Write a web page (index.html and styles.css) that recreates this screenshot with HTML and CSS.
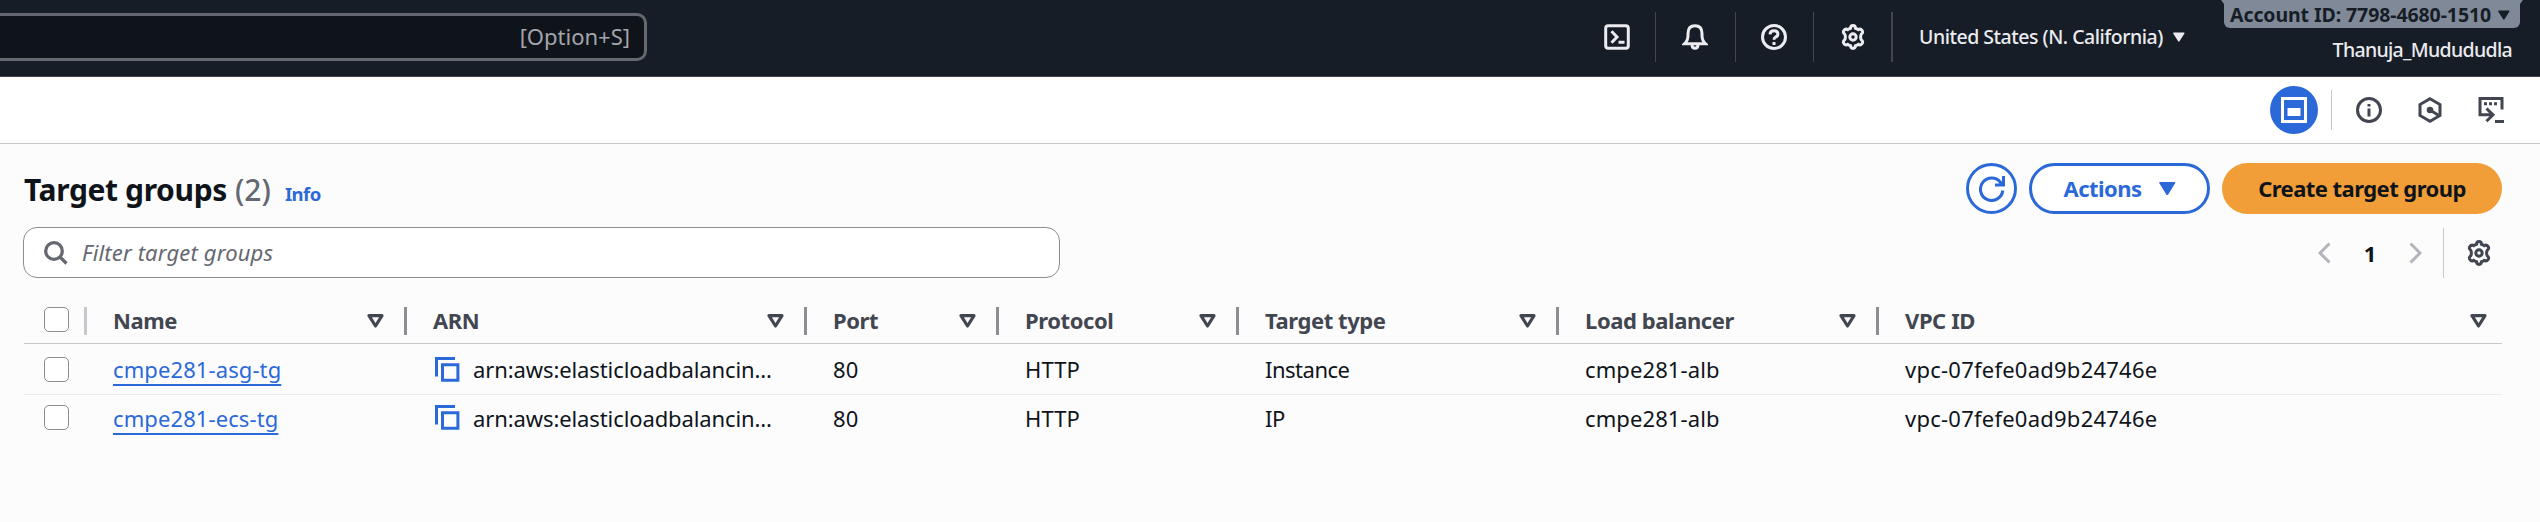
FILE: index.html
```html
<!DOCTYPE html>
<html lang="en">
<head>
<meta charset="utf-8">
<title>Target groups</title>
<link rel="stylesheet" href="styles.css">
</head>
<body>
<svg class="defs" aria-hidden="true">
  <symbol id="gear" viewBox="0 0 26 26">
    <path d="M10.6 4.2 Q10.6 1.6 13 1.6 Q15.4 1.6 15.4 4.2 Q17 4.7 18.2 5.6 Q20.5 4.3 22 6.3 Q23.6 8.6 21.4 10 Q20.600 11.400 20.600 13 Q20.600 14.600 21.4 16 Q23.600 17.400 22 19.700 Q20.500 21.700 18.200 20.400 Q17 21.300 15.400 21.800 Q15.400 24.400 13 24.400 Q10.600 24.400 10.600 21.800 Q9 21.300 7.800 20.400 Q5.500 21.700 4 19.700 Q2.400 17.400 4.600 16 Q5.400 14.600 5.400 13 Q5.400 11.400 4.600 10 Q2.400 8.600 4 6.300 Q5.500 4.300 7.800 5.600 Q9 4.700 10.600 4.200 Z"/>
    <circle cx="13" cy="13" r="3.200"/>
  </symbol>
  <symbol id="sort" viewBox="0 0 17 14"><path d="M2 1.700 H15 L8.500 12 Z"/></symbol>
  <symbol id="down" viewBox="0 0 17 14"><path d="M1 0 H15.500 Q16.800 .4 16 1.600 L9.200 12.400 Q8.250 13.400 7.300 12.400 L.5 1.600 Q-.3 .4 1 0 Z"/></symbol>
  <symbol id="copy" viewBox="0 0 25 25"><path d="M1.500 19.500 V1.500 H20 M7.500 7.700 H22.900 V23.200 H7.500 Z"/></symbol>
</svg>

<header class="topbar">
  <div class="search"><span>[Option+S]</span></div>
  <nav class="tools">
    <a class="tool t1"><svg class="ico" viewBox="0 0 26 26"><rect x="1.700" y="1.700" width="22.600" height="22.600" rx="2.500"/><path d="M7.500 7.200 L13 13 L7.500 18.800 M14.500 18.300 H20.500"/></svg></a>
    <a class="tool t2"><svg class="ico" viewBox="0 0 26 26"><path d="M2.500 19.800 Q6 16.500 6 11.500 V9.500 Q6 1.800 13 1.800 Q20 1.800 20 9.500 V11.500 Q20 16.500 23.500 19.800 Z M10 20.500 Q10 24.300 13 24.300 Q16 24.300 16 20.500"/></svg></a>
    <a class="tool t3"><svg class="ico" viewBox="0 0 26 26"><circle cx="13" cy="13" r="11.500"/><path d="M9 10.300 Q9.200 6.700 13 6.700 Q16.900 6.700 16.900 9.900 Q16.900 12 14.600 13 Q13 13.800 13 15.800 M13 18 V21"/></svg></a>
    <a class="tool t4"><svg class="ico"><use href="#gear"/></svg></a>
  </nav>
  <div class="region"><span>United States (N. California)</span><svg class="caret"><use href="#down"/></svg></div>
  <div class="account">
    <div class="badge"><span>Account ID: 7798-4680-1510</span><svg class="caret"><use href="#down"/></svg></div>
    <div class="user"><span>Thanuja_Mudududla</span></div>
  </div>
</header>

<div class="panelbar">
  <div class="active"><svg class="panel-ico" viewBox="0 0 26 26"><rect x="1.500" y="1.500" width="23" height="23"/><rect class="solid" x="6.500" y="11" width="13" height="8"/></svg></div>
  <i class="rule"></i>
  <svg class="ico p1" viewBox="0 0 26 26"><circle cx="13" cy="13" r="11.500"/><path d="M13 7 V9.600 M13 11.500 V19.500"/></svg>
  <svg class="ico p2" viewBox="0 0 26 26"><path d="M13 1.800 L23 7.500 V18.500 L13 24.200 L3 18.500 V7.500 Z M13 13 L21 18"/><circle class="dot" cx="13" cy="13" r="3.300"/></svg>
  <svg class="ico p3" viewBox="0 0 26 26"><path d="M24 12.500 V1.500 H2 V17.800 H15 M8.500 11.500 L15 17.800 L8.500 24.200 M17 24.500 H26 M6 6.800 H9 M11 6.800 H14 M16 6.800 H19"/></svg>
</div>

<main class="content">
  <div class="head">
    <h1>Target groups</h1>
    <span class="count">(2)</span>
    <a class="info">Info</a>
    <div class="buttons">
      <button class="btn round"><svg class="refresh" viewBox="0 0 26 26"><path d="M23.800 14.500 A11.200 11.200 0 1 1 21.600 6.500 L23.500 9 M24.500 0 V9 H16"/></svg></button>
      <button class="btn actions"><span>Actions</span><svg class="caret big"><use href="#down"/></svg></button>
      <button class="btn create"><span>Create target group</span></button>
    </div>
  </div>
  <div class="filterbar">
    <div class="filter"><svg class="mag" viewBox="0 0 24 24"><circle cx="10" cy="10" r="8.300"/><path d="M16 16 L22.500 22.500"/></svg><span>Filter target groups</span></div>
    <div class="pager">
      <svg class="chev" viewBox="0 0 13 22"><path d="M11.500 1.500 L2 11 L11.500 20.500"/></svg>
      <b>1</b>
      <svg class="chev" viewBox="0 0 13 22"><path d="M1.500 1.500 L11 11 L1.500 20.500"/></svg>
      <i class="rule"></i>
      <svg class="ico dark"><use href="#gear"/></svg>
    </div>
  </div>
  <table class="grid">
    <colgroup><col class="c0"><col class="c1"><col class="c2"><col class="c3"><col class="c4"><col class="c5"><col class="c6"><col class="c7"></colgroup>
    <thead><tr>
      <th class="sel"><div class="hd"><i class="box"></i></div></th>
      <th><div class="hd"><span class="label">Name</span><svg class="sort"><use href="#sort"/></svg></div></th>
      <th><div class="hd"><span class="label">ARN</span><svg class="sort"><use href="#sort"/></svg></div></th>
      <th><div class="hd"><span class="label">Port</span><svg class="sort"><use href="#sort"/></svg></div></th>
      <th><div class="hd"><span class="label">Protocol</span><svg class="sort"><use href="#sort"/></svg></div></th>
      <th><div class="hd"><span class="label">Target type</span><svg class="sort"><use href="#sort"/></svg></div></th>
      <th><div class="hd"><span class="label">Load balancer</span><svg class="sort"><use href="#sort"/></svg></div></th>
      <th class="last"><div class="hd"><span class="label">VPC ID</span><svg class="sort"><use href="#sort"/></svg></div></th>
    </tr></thead>
    <tbody>
      <tr class="r1">
        <td class="sel"><i class="box"></i></td>
        <td><a class="link">cmpe281-asg-tg</a></td>
        <td><div class="arn"><svg class="copy"><use href="#copy"/></svg><span>arn:aws:elasticloadbalancin…</span></div></td>
        <td>80</td><td>HTTP</td><td class="kind">Instance</td><td>cmpe281-alb</td><td class="vpc">vpc-07fefe0ad9b24746e</td>
      </tr>
      <tr class="r2">
        <td class="sel"><i class="box"></i></td>
        <td><a class="link">cmpe281-ecs-tg</a></td>
        <td><div class="arn"><svg class="copy"><use href="#copy"/></svg><span>arn:aws:elasticloadbalancin…</span></div></td>
        <td>80</td><td>HTTP</td><td class="kind">IP</td><td>cmpe281-alb</td><td class="vpc">vpc-07fefe0ad9b24746e</td>
      </tr>
    </tbody>
  </table>
</main>
</body>
</html>
```
FILE: styles.css
```css
* { box-sizing: border-box; }
body {
  margin: 0;
  width: 2540px;
  height: 522px;
  overflow: hidden;
  background: #fcfcfd;
  color: #0f141a;
  font-family: "Noto Sans", "Open Sans", sans-serif;
  font-size: 22px;
  line-height: 30px;
}
svg { display: block; flex: none; fill: none; }
span { white-space: nowrap; }
.defs { position: absolute; width: 0; height: 0; }

.topbar {
  display: flex;
  height: 77px;
  background: #161d26;
  border-bottom: 1px solid #424650;
  color: #ebebf0;
  font-size: 19.500px;
  font-weight: 500;
}
.search {
  display: flex;
  align-items: center;
  justify-content: flex-end;
  width: 647px;
  height: 48px;
  margin-top: 13px;
  padding: 0 14px 2px 0;
  border: 3px solid #656871;
  border-left: 0;
  border-radius: 0 10px 10px 0;
  background: #0f141a;
  color: #a4a4ad;
  font-size: 22px;
  font-weight: 400;
}
.tools { display: flex; margin: 12px 0 0 929px; }
.tool { display: flex; align-items: center; height: 50px; border-right: 1px solid #424650; }
.t1 { width: 80px; padding-left: 28px; }
.t2 { width: 80px; padding-left: 26px; }
.t3 { width: 78px; padding-left: 25px; }
.t4 { width: 79px; padding-left: 26px; border-right-width: 2px; }
.ico { width: 26px; height: 26px; stroke: currentColor; stroke-width: 3; }
.region { display: flex; align-items: center; width: 331px; height: 50px; margin: 12px 0 0; padding-left: 26px; letter-spacing: -.480px; }
.region span { width: 243px; }
.caret { width: 12px; height: 11px; fill: currentColor; }
.region .caret { margin-left: 11px; }
.account { width: 296px; }
.badge {
  position: relative;
  display: flex;
  align-items: center;
  height: 28px;
  padding: 2px 0 0 6px;
  border-radius: 0 0 6px 6px;
  background: #7f8998;
  color: #161d26;
  font-weight: 700;
  letter-spacing: -.090px;
}
.badge::before, .badge::after {
  content: "";
  position: absolute;
  top: 0;
  left: -3px;
  width: 3px;
  height: 4px;
  background: #7f8998;
  clip-path: polygon(0 0, 100% 0, 100% 100%);
}
.badge::after { left: 100%; clip-path: polygon(0 0, 100% 0, 0 100%); }
.badge span { width: 261px; }
.badge .caret { margin-left: 7px; }
.user { margin-top: 7px; padding-right: 8px; text-align: right; letter-spacing: -.680px; }

.panelbar {
  display: flex;
  align-items: center;
  justify-content: flex-end;
  height: 67px;
  padding-right: 36px;
  border-bottom: 1px solid #c6c6cd;
  background: #fff;
  color: #424650;
}
.active { display: flex; align-items: center; justify-content: center; width: 48px; height: 48px; border-radius: 50%; background: #2b69d9; }
.panel-ico { width: 26px; height: 26px; stroke: #fff; stroke-width: 3; }
.solid { fill: #fff; stroke: none; }
.rule { width: 1px; background: #c6c6cd; }
.panelbar .rule { height: 40px; margin: 0 24px 0 13px; }
.p2, .p3 { margin-left: 35px; }
.dot { fill: currentColor; stroke: none; }

.content { padding: 19px 38px 0 23px; }
.head { display: flex; height: 51px; }
h1 { width: 203px; margin: 6px 0 0 1px; font-size: 30px; line-height: 41px; letter-spacing: -.370px; white-space: nowrap; }
.count { margin: 6px 0 0 8px; color: #656871; font-size: 30px; font-weight: 500; line-height: 41px; }
.info { margin: 18px 0 0 14px; color: #2b69d9; font-size: 18.500px; font-weight: 700; line-height: 26px; letter-spacing: -.500px; }
.buttons { display: flex; gap: 12px; margin-left: auto; }
.btn {
  display: flex;
  align-items: center;
  justify-content: center;
  height: 51px;
  padding: 0;
  border: 3px solid #2b69d9;
  border-radius: 26px;
  background: #fff;
  color: #2b69d9;
  font: 700 22px/30px "Noto Sans", sans-serif;
  letter-spacing: -.550px;
}
.btn span { padding-bottom: 1px; }
.round { width: 51px; }
.refresh { width: 26px; height: 26px; stroke: currentColor; stroke-width: 3; }
.actions { width: 181px; }
.actions span { padding-left: 1px; }
.create { width: 280px; border: 0; background: #f19e38; color: #0f141a; }
.big { width: 17px; height: 14px; margin-left: 18px; }

.filterbar { display: flex; justify-content: space-between; height: 51px; margin-top: 13px; }
.filter {
  display: flex;
  align-items: center;
  width: 1037px;
  padding-left: 20px;
  border: 1px solid #8c8c94;
  border-radius: 14px;
  background: #fff;
  color: #656871;
  font-style: italic;
  letter-spacing: .150px;
}
.filter span { padding-bottom: 2px; }
.mag { width: 24px; height: 24px; margin-right: 14px; stroke: currentColor; stroke-width: 3.200; }
.pager { display: flex; align-items: center; padding-right: 10px; }
.pager b { width: 78px; text-align: center; }
.chev { width: 13px; height: 22px; stroke: #b4b4bb; stroke-width: 3; }
.pager .rule { height: 50px; margin: 0 22px 0 21px; }
.dark { color: #424650; }

.grid { width: 2478px; margin: 21px 0 0 1px; table-layout: fixed; border-collapse: separate; border-spacing: 0; }
.c0 { width: 63px; }
.c1 { width: 320px; }
.c2 { width: 400px; }
.c3 { width: 192px; }
.c4 { width: 240px; }
.c5 { width: 320px; }
.c6 { width: 320px; }
.c7 { width: 623px; }
th, td { padding: 0 0 0 26px; text-align: left; white-space: nowrap; }
th { height: 45px; padding-bottom: 1px; border-bottom: 1px solid #c6c6cd; color: #424650; }
.hd { display: flex; align-items: center; height: 28px; border-right: 3px solid #8c8c94; }
.label { padding-bottom: 1px; line-height: 27px; letter-spacing: -.420px; }
.sel .hd { border-color: #c6c6cd; }
.last .hd { border-color: transparent; }
.sort { width: 17px; height: 14px; margin: 0 20px 0 auto; stroke: #424650; stroke-width: 3.200; stroke-linejoin: round; }
.last .sort { margin-right: 12px; }
th.sel, td.sel { padding-left: 20px; }
.box { display: block; width: 25px; height: 25px; border: 1.500px solid #8c8c94; border-radius: 5px; background: #fff; }
.hd .box { margin-bottom: 3px; }
td { height: 45px; letter-spacing: .100px; }
.r1 td { height: 51px; border-bottom: 1px solid #ebebf0; }
.kind { letter-spacing: -.500px; }
.vpc { letter-spacing: .240px; }
.link { color: #2b69d9; text-decoration: underline; text-decoration-thickness: 2px; text-underline-offset: 6px; text-decoration-skip-ink: none; }
.arn { display: flex; align-items: center; padding-left: 2px; letter-spacing: -.100px; }
.copy { width: 25px; height: 25px; margin-right: 13px; stroke: #2b69d9; stroke-width: 3; }
```
